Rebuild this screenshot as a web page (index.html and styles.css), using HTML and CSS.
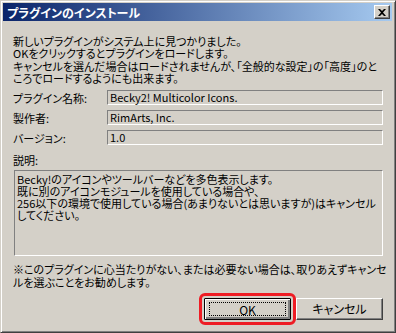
FILE: index.html
```html
<!DOCTYPE html>
<html lang="ja">
<head>
  <meta charset="UTF-8" />
  <title>プラグインのインストール</title>
  <link rel="stylesheet" href="styles.css">
</head>
<body>
  <div class="window">
    <div class="titlebar">
      <span class="title">プラグインのインストール</span>
      <span class="close">
        <svg width="8" height="7" viewBox="0 0 8 7"><path d="M0 0h2l2 2 2-2h2L5 3.5 8 7H6L4 5 2 7H0l3-3.5z" fill="#000"/></svg>
      </span>
    </div>
    <div class="content">
      <p class="intro">新しいプラグインがシステム上に見つかりました。<br>OKをクリックするとプラグインをロードします。<br>キャンセルを選んだ場合はロードされませんが、「全般的な設定」の「高度」のと<br>ころでロードするようにも出来ます。</p>
      <div class="fields">
        <span class="label">プラグイン名称:</span><span class="field">Becky2! Multicolor Icons.</span>
        <span class="label">製作者:</span><span class="field">RimArts, Inc.</span>
        <span class="label">バージョン:</span><span class="field">1.0</span>
      </div>
      <div class="label desc-label">説明:</div>
      <div class="desc">Becky!のアイコンやツールバーなどを多色表示します。<br>既に別のアイコンモジュールを使用している場合や、<br>256以下の環境で使用している場合(あまりないとは思いますが)はキャンセル<br>してください。</div>
      <p class="note">※このプラグインに心当たりがない、または必要ない場合は、取りあえずキャンセ<br>ルを選ぶことをお勧めします。</p>
      <div class="buttons">
        <button class="btn default"><span class="focus">OK</span></button>
        <button class="btn">キャンセル</button>
      </div>
    </div>
  </div>
</body>
</html>
```
FILE: styles.css
```css
* {
  box-sizing: border-box;
  margin: 0;
  padding: 0;
}
body {
  background: #d4d0c8;
  font-family: "Noto Sans CJK JP", sans-serif;
  font-size: 11px;
  font-feature-settings: "palt";
  color: #000;
}
.window {
  width: 396px;
  height: 333px;
  background: #d4d0c8;
  border: 1px solid;
  border-color: #d4d0c8 #404040 #404040 #d4d0c8;
  box-shadow: inset 1px 1px 0 #fff, inset -1px -1px 0 #808080;
  padding: 2px 3px 3px 2px;
}
.titlebar {
  height: 18px;
  background: linear-gradient(to right, #0a246a, #a6caf0);
  display: flex;
  align-items: center;
  justify-content: space-between;
  padding: 0 2px 0 4px;
}
.title {
  color: #fff;
  font-weight: bold;
  font-size: 12px;
}
.close {
  width: 16px;
  height: 14px;
  background: #d4d0c8;
  border: 1px solid;
  border-color: #fff #404040 #404040 #fff;
  box-shadow: inset -1px -1px 0 #808080;
  display: flex;
  align-items: center;
  justify-content: center;
}
.content {
  padding: 14px 9px 0 10px;
}
.intro {
  line-height: 12.4px;
  white-space: nowrap;
}
.fields {
  display: grid;
  grid-template-columns: 94px 1fr;
  row-gap: 4px;
  margin-top: 5px;
  align-items: center;
}
.field {
  height: 15px;
  line-height: 12px;
  border: 1px solid;
  border-color: #808080 #fff #fff #808080;
  padding: 0 2px;
}
.desc-label {
  margin-top: 8px;
  line-height: 13px;
}
.desc {
  margin: 3px 0 0 1px;
  height: 86px;
  border: 1px solid;
  border-color: #808080 #fff #fff #808080;
  padding: 2px 2px;
  line-height: 12.2px;
  white-space: nowrap;
}
.note {
  margin-top: 7px;
  line-height: 13px;
  white-space: nowrap;
}
.buttons {
  display: flex;
  justify-content: flex-end;
  gap: 5px;
  margin-top: 9px;
}
.btn {
  width: 87px;
  height: 22px;
  font: inherit;
  font-size: 12px;
  background: #d4d0c8;
  border: 1px solid;
  border-color: #fff #404040 #404040 #fff;
  box-shadow: inset -1px -1px 0 #808080;
  display: flex;
  align-items: center;
  justify-content: center;
}
.btn.default {
  border: 1px solid #000;
  box-shadow: inset 1px 1px 0 #fff, inset -2px -2px 0 #808080;
  outline: 3px solid #ee1c24;
  outline-offset: 2px;
  border-radius: 1px;
}
.focus {
  display: block;
  width: 77px;
  height: 14px;
  line-height: 14px;
  border: 1px dotted #000;
  text-align: center;
}
```
